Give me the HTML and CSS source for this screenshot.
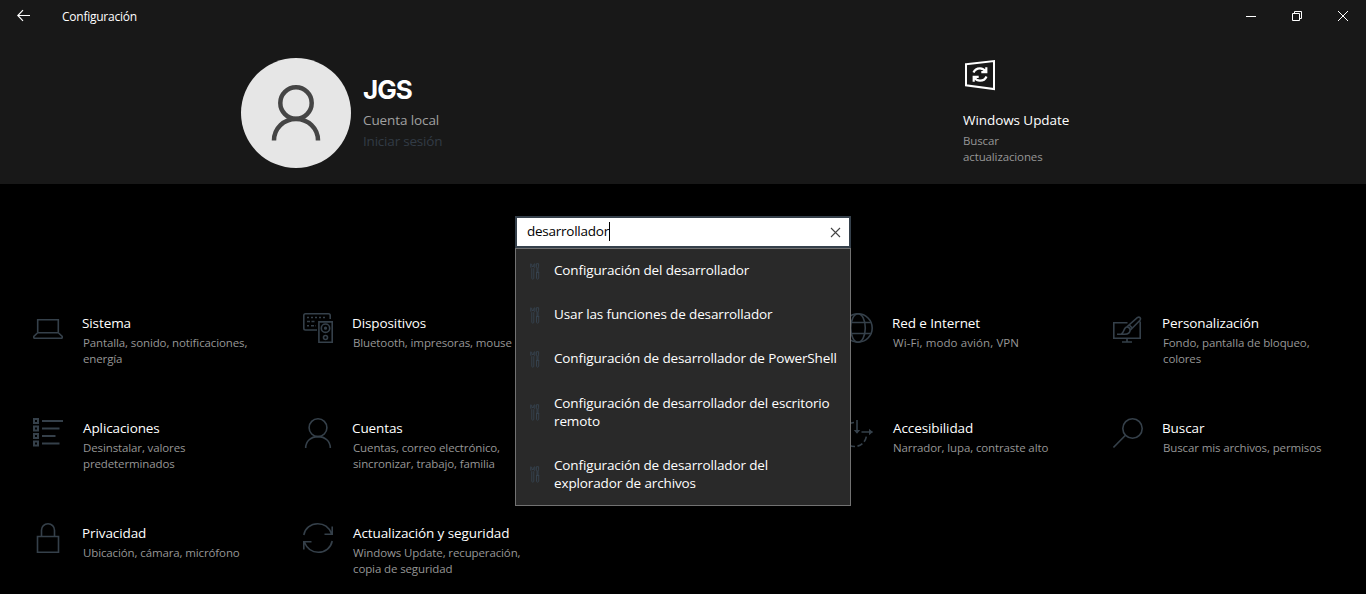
FILE: index.html
```html
<!DOCTYPE html>
<html lang="es">
<head>
<meta charset="utf-8">
<title>Configuración</title>
<link rel="stylesheet" href="styles.css">
</head>
<body>
<header class="top">
  <div class="titlebar">
    <svg class="back" width="14" height="14" viewBox="0 0 14 14"><path d="M13 6.500H1M6 1.200L.8 6.500 6 11.800"/></svg>
    <span class="app-name">Configuración</span>
    <div class="controls">
      <svg width="12" height="12" viewBox="0 0 12 12"><path d="M1 6.500h10"/></svg>
      <svg width="12" height="12" viewBox="0 0 12 12"><path d="M1.500 3.500h7v7h-7zM3.500 3.500v-2h7v7h-2"/></svg>
      <svg width="12" height="12" viewBox="0 0 12 12"><path d="M1 1l10 10M11 1L1 11"/></svg>
    </div>
  </div>
  <div class="summary">
    <div class="account">
      <svg class="avatar" width="110" height="110" viewBox="0 0 110 110"><circle class="disc" cx="55" cy="55" r="55"/><circle class="line" cx="55" cy="45" r="15.700"/><path class="line" d="M33 82.500c0-12.200 9.900-21.500 22-21.500s22 9.300 22 21.500"/></svg>
      <div class="account-text">
        <h1 class="user">JGS</h1>
        <p class="kind">Cuenta local</p>
        <p class="signin">Iniciar sesión</p>
      </div>
    </div>
    <div class="update">
      <svg width="34" height="34" viewBox="0 0 34 34"><path class="frame" d="M3 6.200L31 3v28L3 27.300z"/><path class="arrows" d="M10.500 14.500c1.200-2.900 3.400-4.200 6.500-4.200 2.400 0 4.200 1 5.500 3M23.300 9.300v4.900h-5M23.500 18.500c-1.200 2.900-3.400 4.200-6.500 4.200-2.400 0-4.200-1-5.500-3M10.700 23.700v-4.900h5"/></svg>
      <p class="update-title">Windows Update</p>
      <p class="desc">Buscar actualizaciones</p>
    </div>
  </div>
</header>
<main>
  <div class="search">
    <div class="field"><span class="query">desarrollador</span><span class="caret"></span>
      <svg class="clear" width="11" height="11" viewBox="0 0 11 11"><path d="M1 1l9 9M10 1l-9 9"/></svg>
    </div>
    <ul class="results">
      <li><svg class="tools" viewBox="0 0 10 17"><use href="#tools"/></svg><span>Configuración del desarrollador</span></li>
      <li><svg class="tools" viewBox="0 0 10 17"><use href="#tools"/></svg><span>Usar las funciones de desarrollador</span></li>
      <li><svg class="tools" viewBox="0 0 10 17"><use href="#tools"/></svg><span>Configuración de desarrollador de PowerShell</span></li>
      <li class="tall"><svg class="tools" viewBox="0 0 10 17"><use href="#tools"/></svg><span>Configuración de desarrollador del escritorio<br>remoto</span></li>
      <li class="tall"><svg class="tools" viewBox="0 0 10 17"><use href="#tools"/></svg><span>Configuración de desarrollador del<br>explorador de archivos</span></li>
    </ul>
  </div>
  <div class="grid">
    <section class="cat c1"><svg class="icon" viewBox="0 0 30 30"><path d="M4.700 19V6.700h20.600V19M4.700 19.700h20.600l3.900 3.800c.3 1-.2 1.700-1 1.700H1.800c-.8 0-1.300-.7-1-1.700z"/></svg><div><h2>Sistema</h2><p class="desc">Pantalla, sonido, notificaciones,<br>energía</p></div></section>
    <section class="cat c2"><svg class="icon" viewBox="0 0 30 30"><path d="M14 17H2.500C1.500 17 .8 16.300.8 15.300V2.500C.8 1.500 1.500.8 2.500.8h23c1 0 1.700.7 1.700 1.700V6M15.900 8.900h13.300v20.300H15.900z"/><path d="M4 4.500h20" stroke-dasharray="2 2"/><path d="M4 8.500h9M4 12.800h2M8 12.800h5" stroke-dasharray="3 1.500"/><circle cx="22.500" cy="15.200" r="4.200"/><circle cx="22.500" cy="15.200" r=".8"/><circle cx="22.500" cy="24.500" r="2"/></svg><div><h2>Dispositivos</h2><p class="desc">Bluetooth, impresoras, mouse</p></div></section>
    <section class="cat c4"><svg class="icon" viewBox="0 0 30 30"><circle cx="15" cy="15" r="14.200"/><ellipse cx="15" cy="15" rx="7.300" ry="14.200"/><path d="M2.300 9.500h25.400M2.300 20.500h25.400"/></svg><div><h2>Red e Internet</h2><p class="desc wide">Wi-Fi, modo avión, VPN</p></div></section>
    <section class="cat c5"><svg class="icon" viewBox="0 0 30 30"><path d="M14.500 9.800H.8v15.400h26.400V8.500M14 25.500v3.200M9 29h10M4 21.200h7.500c3.200 0 5.600-1.600 5.600-4.200 0-1.700-1.500-3-3.200-3-3.400 0-2.100 5.500-5.800 7.200M13.700 14L24.300 4.700c2.200-1.500 4.200.4 2.700 2.600L17.200 17.200"/><path d="M16 11.800l3.300 3.300"/></svg><div><h2>Personalización</h2><p class="desc">Fondo, pantalla de bloqueo,<br>colores</p></div></section>
    <section class="cat c1"><svg class="icon" viewBox="0 0 30 30"><path d="M1 1h4v4H1zM1 8.500h4v4H1zM1 16h4v4H1zM1 23.500h4v4H1z" stroke-width="2"/><path d="M9 3h21M9 10.500h17.500M9 18h13.500M9 25.500h17.500" stroke-width="1.800"/></svg><div><h2 class="inset">Aplicaciones</h2><p class="desc">Desinstalar, valores<br>predeterminados</p></div></section>
    <section class="cat c2"><svg class="icon" viewBox="0 0 30 30"><circle cx="15" cy="9.700" r="8.900"/><path d="M2.700 30c0-6.800 5.200-11.400 12.300-11.400S27.300 23.200 27.300 30"/></svg><div><h2>Cuentas</h2><p class="desc">Cuentas, correo electrónico,<br>sincronizar, trabajo, familia</p></div></section>
    <section class="cat c4"><svg class="icon" viewBox="0 0 30 30"><path d="M11 4.500A12 12 0 1 0 23.500 17" stroke-dasharray="5.500 2.500"/><path d="M14 2v13M18.500 14h11"/><path class="head" d="M10.800 12h6.400L14 15.800zM26 10.800v6.400l3.800-3.200z"/></svg><div><h2 class="inset">Accesibilidad</h2><p class="desc">Narrador, lupa, contraste alto</p></div></section>
    <section class="cat c5"><svg class="icon" viewBox="0 0 30 30"><circle cx="19.500" cy="10.500" r="9.700"/><path d="M12.500 17.300L.4 29.500"/></svg><div><h2>Buscar</h2><p class="desc">Buscar mis archivos, permisos</p></div></section>
    <section class="cat c1"><svg class="icon" viewBox="0 0 30 30"><path d="M4.500 13.500h21v15.700h-21zM8.500 13.500V7.300C8.500 3.500 11.300.8 15 .8s6.500 2.700 6.500 6.500v6.200"/></svg><div><h2>Privacidad</h2><p class="desc">Ubicación, cámara, micrófono</p></div></section>
    <section class="cat c2"><svg class="icon" viewBox="0 0 30 30"><path d="M.8 12C2 5.500 7.500.8 14.700.8 21 .8 26 4.500 28.500 10.500M29.200 3.500v7.700h-7.700M29.200 18c-1.200 6.500-6.700 11.200-13.900 11.200C9 29.200 4 25.500 1.500 19.500M.8 26.500v-7.700h7.700"/></svg><div><h2 class="inset">Actualización y seguridad</h2><p class="desc">Windows Update, recuperación,<br>copia de seguridad</p></div></section>
  </div>
</main>
<svg class="defs" width="0" height="0"><defs><g id="tools"><path d="M.7.800v3.400l1.100 1.300v9.700c0 1.300 2 1.300 2 0V5.500l1.100-1.300V.8L3.700 1.500v2H1.900v-2zM6.400.7h2.200v3.200L8 5v4h-1V5l-.6-1.100zM6 9.500h3.300M6.500 10v5.200c0 1.300 2.200 1.300 2.200 0V10"/></g></defs></svg>
</body>
</html>
```
FILE: styles.css
```css
* { box-sizing: border-box; margin: 0; padding: 0; }
body {
  width: 1366px; height: 594px; overflow: hidden;
  background: #000; color: #fff;
  font-family: "Open Sans", "Noto Sans", sans-serif;
  font-size: 13.5px;
}
svg { display: block; fill: none; flex: none; }
.top { height: 184px; background: #181818; }
.titlebar { height: 32px; display: flex; align-items: center; padding: 0 17px; }
.back { stroke: #fff; stroke-width: 1.2; }
.app-name { margin-left: 31px; font-size: 12px; letter-spacing: -.25px; line-height: 16px; padding-top: 1px; }
.controls { margin-left: auto; display: flex; gap: 34px; stroke: #fff; }
.summary { display: flex; padding: 26px 0 0 241px; }
.account { display: flex; width: 722px; }
.avatar .disc { fill: #e6e6e6; }
.avatar .line { stroke: #454545; stroke-width: 4.5; }
.account-text { padding: 14px 0 0 12px; }
.user { font-family: Inter, "Open Sans", sans-serif; font-size: 26px; line-height: 36px; font-weight: 700; letter-spacing: -1px; }
.kind { margin-top: 1px; line-height: 22px; letter-spacing: -.1px; color: #a0a0a0; }
.signin { line-height: 21px; letter-spacing: -.2px; color: #323b45; }
.update { width: 110px; }
.update svg { stroke: #fff; stroke-width: 2; }
.update .arrows { stroke-width: 2.2; }
.update-title { margin-top: 18px; line-height: 20px; letter-spacing: -.07px; white-space: nowrap; }
.desc { font-size: 11.5px; line-height: 16px; letter-spacing: -.12px; color: #969696; }
.desc.wide { letter-spacing: .1px; }
.update .desc { margin-top: 3px; }

main { padding-top: 32px; }
.search { position: relative; width: 336px; margin: 0 auto; }
.field {
  height: 32px; display: flex; align-items: center; padding: 0 8px 0 10px;
  border: 2px solid #35404b; background: #fff; color: #000;
}
.query { line-height: 20px; letter-spacing: -.25px; padding-bottom: 2px; }
.caret { width: 1px; height: 19px; margin-bottom: 2px; background: #000; }
.clear { margin-left: auto; stroke: #444; stroke-width: 1.1; }
.results {
  position: absolute; top: 32px; left: 0; width: 336px; z-index: 2;
  list-style: none; background: #292929; border: 1px solid #727272;
}
.results li { height: 44px; display: flex; align-items: center; padding-left: 14px; line-height: 18px; letter-spacing: -.13px; white-space: nowrap; }
.results .tall { height: 62px; }
.results span { margin-left: 14px; padding-bottom: 2px; }
.results .tall span { padding-bottom: 0; }
.tools { width: 10px; height: 17px; stroke: #35414c; stroke-width: 1; }

.grid { display: grid; grid-template-columns: repeat(4, 270px) 1fr; grid-template-rows: 105px 105px auto; padding: 65px 0 0 33px; }
.cat { display: flex; gap: 19px; }
.cat h2 { font-size: 13.5px; font-weight: 400; line-height: 20px; letter-spacing: -.1px; white-space: nowrap; }
.cat h2.inset { padding-left: 1px; }
.cat .desc { margin: 2px 0 0 1px; white-space: nowrap; }
.icon { width: 30px; height: 30px; stroke: #35404a; stroke-width: 1.6; }
.icon .head { fill: #35404a; stroke: none; }
.c1 { grid-column: 1; }
.c2 { grid-column: 2; }
.c4 { grid-column: 4; }
.c5 { grid-column: 5; }
.defs { position: absolute; }
```
